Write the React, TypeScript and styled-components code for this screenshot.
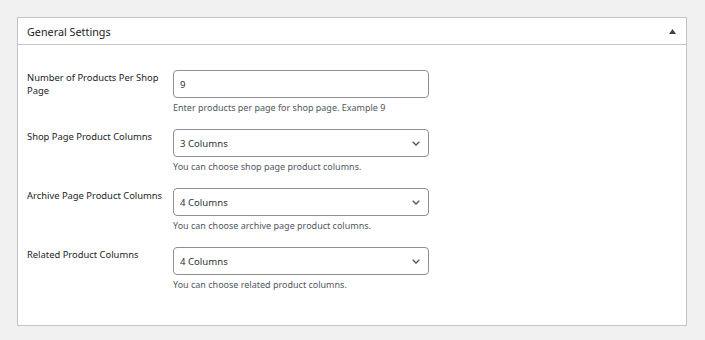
import React from 'react'
import { styled, createGlobalStyle } from 'styled-components'

const GlobalStyle = createGlobalStyle`
    body {
        margin: 0;
        background: #f0f0f1;
        font-family: "Noto Sans", "Liberation Sans", sans-serif;
        color: #1d2327;
    }
`

const fields = [
    { label: 'Number of Products Per Shop Page', kind: 'input', value: '9', desc: 'Enter products per page for shop page. Example 9' },
    { label: 'Shop Page Product Columns', kind: 'select', value: '3 Columns', desc: 'You can choose shop page product columns.' },
    { label: 'Archive Page Product Columns', kind: 'select', value: '4 Columns', desc: 'You can choose archive page product columns.' },
    { label: 'Related Product Columns', kind: 'select', value: '4 Columns', desc: 'You can choose related product columns.' },
]

const options = ['1 Column', '2 Columns', '3 Columns', '4 Columns', '5 Columns', '6 Columns']

const App = () => {
  return (
    <>
        <GlobalStyle />
        <Page>
            <Panel>
                <PanelHeader>
                    <Title>General Settings</Title>
                    <Toggle aria-label='Toggle panel'>
                        <svg width='7' height='5' viewBox='0 0 7 5'>
                            <path d='M3.5 0 L7 5 L0 5 Z' fill='#3c434a' />
                        </svg>
                    </Toggle>
                </PanelHeader>
                <PanelBody>
                    {fields.map((f) => (
                        <Row key={f.label}>
                            <Label>{f.label}</Label>
                            <Field>
                                {f.kind === 'input' ? (
                                    <TextInput type='number' defaultValue={f.value} />
                                ) : (
                                    <SelectWrap>
                                        <Select defaultValue={f.value}>
                                            {options.map((o) => <option key={o}>{o}</option>)}
                                        </Select>
                                        <Chevron width='8' height='5' viewBox='0 0 8 5'>
                                            <path d='M0.7 0.8 L4 4 L7.3 0.8' fill='none' stroke='#50575e' strokeWidth='1.3' />
                                        </Chevron>
                                    </SelectWrap>
                                )}
                                <Desc>{f.desc}</Desc>
                            </Field>
                        </Row>
                    ))}
                </PanelBody>
            </Panel>
        </Page>
    </>
  )
}

export default App;

const Page = styled.div`
    padding: 17px 0 0 17px;
`

const Panel = styled.section`
    width: 670px;
    box-sizing: border-box;
    background: #fff;
    border: 1px solid #c3c4c7;
    box-shadow: 0 1px 1px rgba(0, 0, 0, 0.04);
`

const PanelHeader = styled.div`
    height: 26px;
    display: flex;
    align-items: center;
    justify-content: space-between;
    padding: 0 10px 0 9px;
    border-bottom: 1px solid #c3c4c7;
`

const Title = styled.h2`
    margin: 0;
    font-size: 10.8px;
    font-weight: 400;
    color: #1d2327;
`

const Toggle = styled.button`
    border: 0;
    background: none;
    padding: 0;
    display: flex;
    align-items: center;
    cursor: pointer;
`

const PanelBody = styled.div`
    padding: 25px 9px 33px;
    display: flex;
    flex-direction: column;
    row-gap: 14px;
`

const Row = styled.div`
    display: grid;
    grid-template-columns: 146px 256px;
    align-items: start;
`

const Label = styled.div`
    width: 140px;
    padding-top: 1px;
    font-size: 9.4px;
    line-height: 13px;
    color: #1d2327;
`

const Field = styled.div`
    display: flex;
    flex-direction: column;
    row-gap: 3px;
`

const controlStyle = `
    width: 100%;
    height: 28px;
    box-sizing: border-box;
    border: 1px solid #8c8f94;
    border-radius: 4px;
    background: #fff;
    font-family: "Noto Sans", "Liberation Sans", sans-serif;
    font-size: 9.6px;
    color: #2c3338;
    padding: 0 6px;
    margin: 0;
    outline: none;
`

const TextInput = styled.input`
    ${controlStyle}
    appearance: textfield;
    &::-webkit-inner-spin-button,
    &::-webkit-outer-spin-button {
        -webkit-appearance: none;
        margin: 0;
    }
`

const SelectWrap = styled.div`
    position: relative;
`

const Select = styled.select`
    ${controlStyle}
    appearance: none;
    padding-right: 24px;
`

const Chevron = styled.svg`
    position: absolute;
    right: 9px;
    top: 12px;
    pointer-events: none;
`

const Desc = styled.p`
    margin: 0;
    font-size: 9px;
    line-height: 14px;
    color: #50575e;
`
